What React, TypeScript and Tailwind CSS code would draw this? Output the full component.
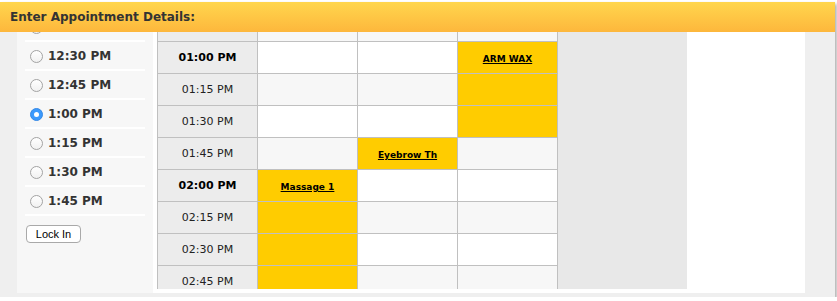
const slots = ["12:15 PM", "12:30 PM", "12:45 PM", "1:00 PM", "1:15 PM", "1:30 PM", "1:45 PM"];
const selected = "1:00 PM";
// first slot and first row sit above the scroll edge, only their bottom shows
const hidden = "12:15 PM";

type Cell = { fill?: boolean; label?: string };

const rows: { time: string; bold?: boolean; cells: Cell[] }[] = [
  { time: "", cells: [{}, {}, {}] },
  { time: "01:00 PM", bold: true, cells: [{}, {}, { fill: true, label: "ARM WAX" }] },
  { time: "01:15 PM", cells: [{}, {}, { fill: true }] },
  { time: "01:30 PM", cells: [{}, {}, { fill: true }] },
  { time: "01:45 PM", cells: [{}, { fill: true, label: "Eyebrow Th" }, {}] },
  { time: "02:00 PM", bold: true, cells: [{ fill: true, label: "Massage 1" }, {}, {}] },
  { time: "02:15 PM", cells: [{ fill: true }, {}, {}] },
  { time: "02:30 PM", cells: [{ fill: true }, {}, {}] },
  { time: "02:45 PM", cells: [{ fill: true }, {}, {}] },
];

const Radio = ({ checked }: { checked: boolean }) =>
  checked ? (
    <span className="w-[13px] h-[13px] rounded-full bg-[#3b99fc] border border-[#3689e6] flex items-center justify-center">
      <span className="w-[5px] h-[5px] rounded-full bg-white" />
    </span>
  ) : (
    <span className="w-[13px] h-[13px] rounded-full border border-[#a3a3a3] bg-gradient-to-b from-white to-[#f1f1f1]" />
  );

export default function App() {
  return (
    <div className="w-[835px] mt-[2px] bg-[#efefef] shadow-[2px_2px_3px_rgba(0,0,0,0.3)] font-['DejaVu_Sans',sans-serif]">
      <div className="h-[30px] px-[10px] flex items-center bg-gradient-to-b from-[#ffd64d] to-[#fdb73c]">
        <h2 className="text-[12px] font-bold text-[#333]">Enter Appointment Details:</h2>
      </div>
      <div className="pl-[17px] pr-[30px] pb-[4px]">
        <div className="flex bg-white h-[261px]">
          {/* time slot picker */}
          <div className="w-[136px] bg-[#f7f7f7] overflow-hidden">
            <ul className="-mt-[19px] px-[8px]">
              {slots.map((s) => (
                <li key={s} className="h-[29px] flex items-center border-b-2 border-white pl-[5px] pt-px gap-[5px]">
                  <Radio checked={s === selected} />
                  {s !== hidden && <span className="text-[12px] font-bold text-[#333]">{s}</span>}
                </li>
              ))}
            </ul>
            <button className="mt-[9px] ml-[9px] w-[55px] h-[18px] rounded-[4px] border border-[#a9a9a9] bg-white text-[11px] text-black font-['Liberation_Sans',sans-serif] leading-none">
              Lock In
            </button>
          </div>

          {/* schedule grid */}
          <div className="ml-[4px] h-[257px] overflow-hidden flex">
            <div className="w-[401px] -mt-[23px] grid grid-cols-[99px_99px_99px_99px] auto-rows-[31px] gap-px p-px bg-[#c0c0c0] self-start">
              {rows.map((r, i) => (
                <div key={i} className="contents">
                  <div
                    className={`bg-[#ececec] flex items-center justify-center pt-px text-[11px] ${
                      r.bold ? "font-bold text-black" : "text-[#222]"
                    }`}
                  >
                    {r.time}
                  </div>
                  {r.cells.map((c, j) => (
                    <div
                      key={j}
                      className={`flex items-center justify-center pt-[4px] ${
                        c.fill ? "bg-[#ffcc00]" : i % 2 === 0 ? "bg-[#f7f7f7]" : "bg-white"
                      }`}
                    >
                      {c.label && (
                        <a className="text-[9px] font-bold text-black underline">{c.label}</a>
                      )}
                    </div>
                  ))}
                </div>
              ))}
            </div>
            <div className="w-[129px] h-full bg-[#e8e8e8]" />
          </div>
        </div>
      </div>
    </div>
  );
}
